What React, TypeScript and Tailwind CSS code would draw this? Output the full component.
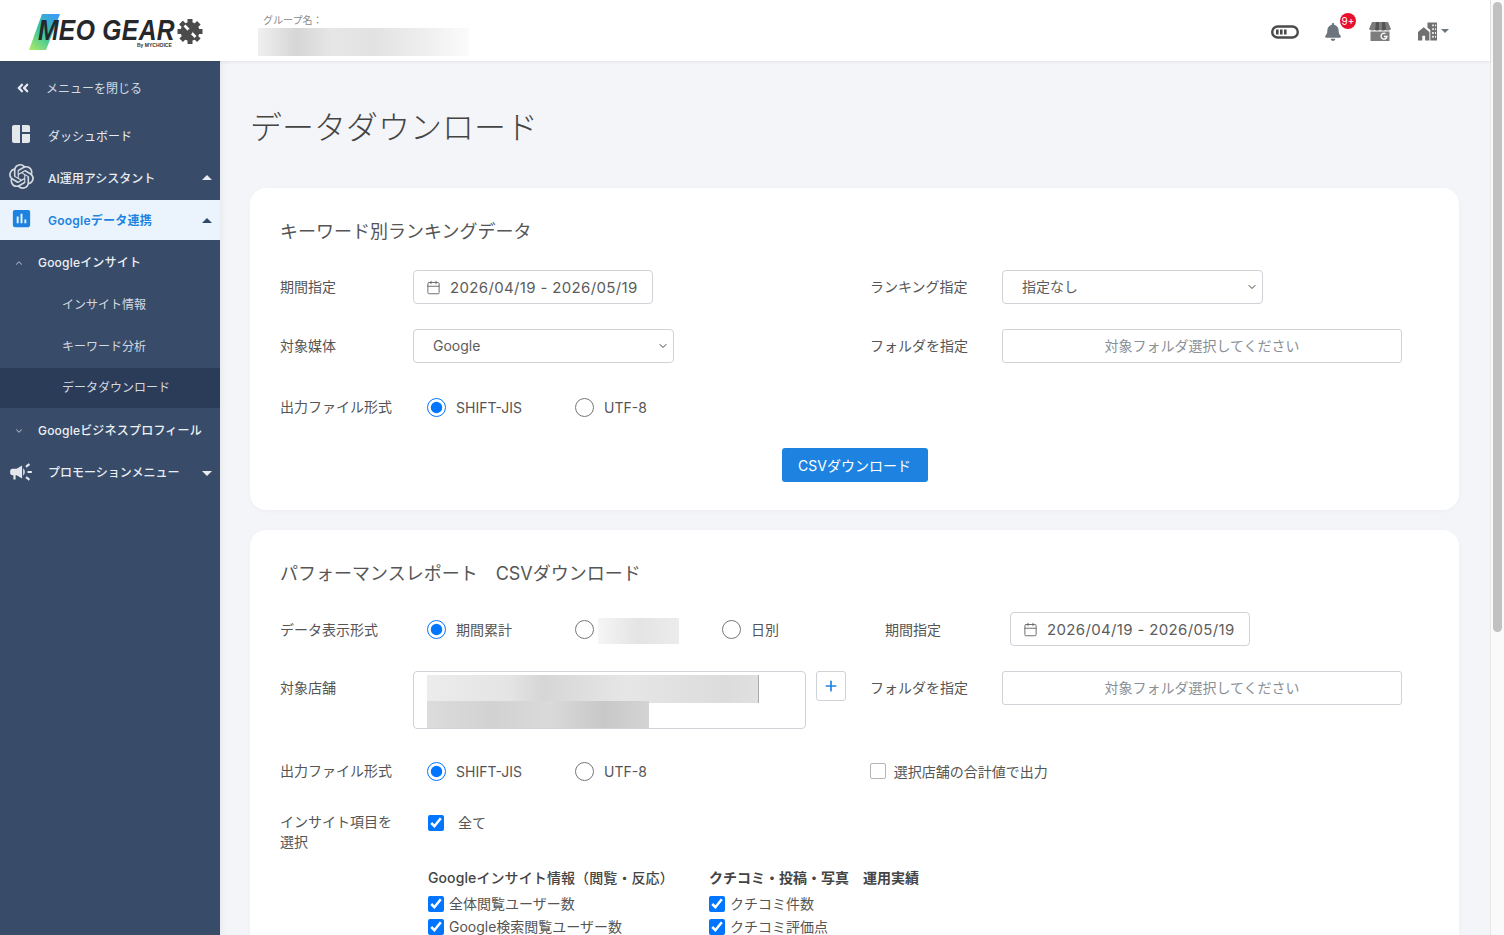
import { ReactNode } from 'react';
import { Calendar, ChevronDown, ChevronUp, Plus } from 'lucide-react';
import { FaAngleDoubleLeft, FaBell } from 'react-icons/fa';
import { MdAssessment, MdCampaign, MdSpaceDashboard } from 'react-icons/md';
import { SiOpenai } from 'react-icons/si';

const font = '[font-family:Inter,"Noto_Sans_CJK_JP",sans-serif]';

const Caret = ({ up, className }: { up?: boolean; className?: string }) => (
  <svg width="12" height="6" viewBox="0 0 12 6" className={className}>
    <path d={up ? 'M0 6 L6 0 L12 6 Z' : 'M0 0 L6 6 L12 0 Z'} fill="currentColor" />
  </svg>
);

const LogoGear = () => (
  <svg width="26" height="27" viewBox="0 0 26 26" className="absolute left-[177px] top-[18px]">
    {[0, 45, 90, 135, 180, 225, 270, 315].map((deg) => (
      <rect key={deg} x="10.5" y="0.5" width="5" height="6" fill="#4b4b4b" transform={`rotate(${deg} 13 13)`} />
    ))}
    <circle cx="13" cy="13" r="9.5" fill="#4b4b4b" />
    <path d="M4 4 L9 9" stroke="#4b4b4b" strokeWidth="5" />
    <path d="M7.5 7 L18.5 18.5" stroke="#fff" strokeWidth="2.6" />
    <circle cx="13" cy="13" r="2.6" fill="#4b4b4b" />
  </svg>
);

const Logo = () => (
  <div className="relative w-[220px] h-[61px] shrink-0">
    <svg width="34" height="38" viewBox="0 0 34 38" className="absolute left-[28px] top-[13px]">
      <defs>
        <linearGradient id="logoGrad" x1="0.8" y1="0" x2="0.1" y2="1">
          <stop offset="0" stopColor="#3b9bf5" />
          <stop offset="0.5" stopColor="#35c4a0" />
          <stop offset="1" stopColor="#a5e868" />
        </linearGradient>
      </defs>
      <path d="M14 1 H32 L18 37 H1 Z" fill="url(#logoGrad)" />
    </svg>
    <span className="absolute left-[38px] top-[18px] text-[29px] leading-[25px] italic font-bold text-[#26272b] tracking-[0.4px] whitespace-nowrap [font-family:'Liberation_Sans',sans-serif] scale-x-[0.85] origin-left">
      MEO GEAR
    </span>
    <span className="absolute left-[137px] top-[43px] text-[5px] leading-[5px] font-bold text-[#333] whitespace-nowrap [font-family:'Liberation_Sans',sans-serif]">
      By MYCHOICE
    </span>
    <LogoGear />
  </div>
);

const Header = () => (
  <header className="h-[61px] bg-white flex items-center shadow-[0_1px_3px_rgba(0,0,0,0.08)] relative z-10 shrink-0">
    <Logo />
    <div className="ml-[38px] self-start pt-[13px]">
      <div className="text-[10px] leading-[14px] text-[#8a8a8a] pl-[5px]">グループ名：</div>
      <div className="w-[211px] h-[28px] mt-px bg-[linear-gradient(90deg,#f0f0f0_0%,#d6d6d6_18%,#e6e6e6_35%,#e2e2e2_55%,#efefef_80%,#fbfbfb_100%)]" />
    </div>
    <div className="ml-auto flex items-center pr-[41px]">
      <svg width="28" height="14" viewBox="0 0 28 14" className="mr-[25px] mt-[2px]">
        <rect x="1.2" y="1.5" width="25.6" height="11" rx="5.5" fill="none" stroke="#4a4a4a" strokeWidth="2.4" />
        <rect x="5" y="4.5" width="2.6" height="5" fill="#4a4a4a" />
        <rect x="9" y="4.5" width="2.6" height="5" fill="#4a4a4a" />
        <rect x="13" y="4.5" width="2.6" height="5" fill="#4a4a4a" />
      </svg>
      <div className="relative w-[17px] h-[20px] mr-[28px]">
        <FaBell size={18} className="text-[#6c757d] mt-[2px]" />
        <span className="absolute left-[16px] top-[-8px] w-[16px] h-[16px] rounded-full bg-[#e8112d] text-white text-[10px] leading-[16px] text-center">
          9+
        </span>
      </div>
      <svg width="22" height="19" viewBox="0 0 22 19" className="mr-[27px] mt-[2px]">
        <path d="M3 0 H19 L22 7 Q20 9.5 16.5 8 Q14 9.5 11 8 Q8 9.5 5.5 8 Q2 9.5 0 7 Z" fill="#7d7d7d" />
        <path d="M7 0 H10 V8 H6 Z M13 0 H16 L17 8 H13 Z" fill="#555" />
        <path d="M1.5 9.5 H20.5 V19 H1.5 Z" fill="#7d7d7d" />
        <path d="M16.5 11.5 a3 3 0 1 0 1.5 3 h-3" fill="none" stroke="#fff" strokeWidth="1.3" />
      </svg>
      <svg width="19" height="19" viewBox="0 0 20 19" className="mt-[2px]">
        <path d="M10 0 H20 V19 H13 V8 L10 5.5 Z" fill="#707070" />
        <path d="M15 2 h1.6 v2 H15 Z M18 2 h1 v2 h-1 Z M15 6 h1.6 v2 H15 Z M18 6 h1 v2 h-1 Z M15 10 h1.6 v2 H15 Z M18 10 h1 v2 h-1 Z M15 14 h1.6 v2 H15 Z M18 14 h1 v2 h-1 Z" fill="#fff" />
        <path d="M6 5 L0 10 V19 H4.5 V14 H7.5 V19 H12 V10 Z" fill="#707070" />
      </svg>
      <Caret className="text-[#6c757d] ml-[4px] w-[8px] h-[4px]" />
    </div>
  </header>
);

const NavRow = ({
  icon,
  label,
  caret,
  active,
  bold = true,
  textClass,
}: {
  icon: ReactNode;
  label: string;
  caret?: 'up' | 'down';
  active?: boolean;
  bold?: boolean;
  textClass?: string;
}) => (
  <div className={`flex items-center pl-[48px] pr-[8px] relative text-[12px] ${bold ? 'font-medium' : ''} ${active ? 'h-[40px] bg-[#ebf4fc] text-[#1e83e0] font-semibold' : 'h-[42px] text-[#e9ecf1]'}`}>
    <span className="absolute left-0 w-[42px] flex justify-center">{icon}</span>
    <span className={`flex-1 ${textClass ?? ''}`}>{label}</span>
    {caret && <Caret up={caret === 'up'} className={`w-[10px] h-[5px] ${active ? 'text-[#2f4a6d]' : 'text-[#e9ecf1]'}`} />}
  </div>
);

const SubRow = ({ label, up }: { label: string; up: boolean }) => (
  <div className="h-[42px] flex items-center pl-[14px] text-[12px] font-medium tracking-[0.2px] text-[#eef0f4]">
    {up ? <ChevronUp size={10} className="text-[#aab4c2] mr-[14px]" strokeWidth={2.5} /> : <ChevronDown size={10} className="text-[#aab4c2] mr-[14px]" strokeWidth={2.5} />}
    {label}
  </div>
);

const LeafRow = ({ label, current }: { label: string; current?: boolean }) => (
  <div className={`flex items-center pl-[62px] text-[12px] text-[#d4d9e1] ${current ? 'h-[40px] mb-[2px] bg-[#2b3c59]' : 'h-[42px]'}`}>{label}</div>
);

const Sidebar = () => (
  <aside className="w-[220px] shrink-0 bg-[#384c69] pt-[6px] relative z-[5]">
    <div className="h-[42px] flex items-center pl-[16px] text-[12px] text-[#d4d9e1]">
      <FaAngleDoubleLeft size={14} className="text-[#e9ecf1] mr-[16px]" />
      <span className="pt-[2px]">メニューを閉じる</span>
    </div>
    <div className="h-[5px]" />
    <NavRow icon={<MdSpaceDashboard size={24} className="text-[#e4e7ec] -translate-y-px" />} label="ダッシュボード" bold={false} textClass="pt-[4px]" />
    <NavRow icon={<SiOpenai size={25} className="text-[#d6dae1] -translate-y-px" />} label="AI運用アシスタント" caret="up" textClass="pt-[4px]" />
    <div className="h-[2px]" />
    <NavRow icon={<MdAssessment size={23} className="text-[#1e83e0] -translate-y-[2px]" />} label="Googleデータ連携" caret="up" active textClass="pt-[2px] tracking-[0.25px]" />
    <div className="h-[2px]" />
    <SubRow label="Googleインサイト" up />
    <LeafRow label="インサイト情報" />
    <LeafRow label="キーワード分析" />
    <LeafRow label="データダウンロード" current />
    <SubRow label="Googleビジネスプロフィール" up={false} />
    <NavRow icon={<MdCampaign size={26} className="text-[#e4e7ec] -translate-y-px" />} label="プロモーションメニュー" caret="down" />
  </aside>
);

const DateRange = () => (
  <div className="w-[240px] h-[34px] flex items-center border border-[#cfd3d8] rounded-[4px] bg-white pl-[12px] text-[15px] tracking-[0.35px] text-[#5c5c5c]">
    <Calendar size={15} className="text-[#666] mr-[9px]" strokeWidth={1.5} />
    <span className="pt-[2px]">2026/04/19 - 2026/05/19</span>
  </div>
);

const SelectBox = ({ value }: { value: string }) => (
  <div className="w-[261px] h-[34px] flex items-center border border-[#cfd3d8] rounded-[4px] bg-white pl-[19px] pr-[4px] text-[14px] text-[#5c5c5c]">
    <span className="flex-1 pb-[2px]">{value}</span>
    <ChevronDown size={12} className="text-[#444]" />
  </div>
);

const FolderButton = () => (
  <div className="w-[400px] h-[34px] flex items-center justify-center border border-[#cfd3d8] rounded-[3px] bg-white text-[14px] text-[#8a8f96]">
    <span className="pb-[2px]">対象フォルダ選択してください</span>
  </div>
);

const Radio = ({ label, name, checked, className }: { label?: string; name: string; checked?: boolean; className?: string }) => (
  <label className={`flex items-center text-[14px] text-[#555] ${className ?? ''}`}>
    <input type="radio" defaultChecked={checked} name={name} className="w-[19px] h-[19px] m-0 mr-[10px] accent-[#0075ff]" />
    {label}
  </label>
);

const Check = ({ label, className }: { label: string; className?: string }) => (
  <label className={`flex items-center text-[14px] leading-[23px] text-[#555] ${className ?? ''}`}>
    <input type="checkbox" defaultChecked className="w-[16px] h-[16px] m-0 mr-[5px] accent-[#0075ff]" />
    {label}
  </label>
);

const FileFormat = ({ name }: { name: string }) => (
  <>
    <Radio name={name} label="SHIFT-JIS" checked className="w-[148px]" />
    <Radio name={name} label="UTF-8" />
  </>
);

const Label = ({ children, w = 'w-[147px]' }: { children: ReactNode; w?: string }) => (
  <div className={`${w} shrink-0 text-[14px] text-[#555]`}>{children}</div>
);

const Card = ({ children, className }: { children: ReactNode; className?: string }) => (
  <section className={`bg-white rounded-[16px] px-[30px] shadow-[0_1px_4px_rgba(0,0,0,0.03)] ${className ?? ''}`}>{children}</section>
);

const App = () => (
  <div className={`w-[1504px] h-[935px] overflow-hidden flex ${font}`}>
    <div className="flex-1 flex flex-col min-w-0">
      <Header />
      <div className="flex-1 flex min-h-0">
        <Sidebar />
        <main className="flex-1 bg-[#f4f5f8] px-[30px] pr-[31px] overflow-hidden shadow-[inset_8px_0_8px_-8px_rgba(0,0,0,0.08)]">
          <h1 className="text-[32px] leading-[44px] text-[#444] pt-[45px] mb-[38px] font-light">データダウンロード</h1>

          <Card className="h-[322px] pt-[31px]">
            <h2 className="text-[18px] leading-[26px] text-[#555]">キーワード別ランキングデータ</h2>
            <div className="flex mt-[25px]">
              <div className="w-[590px] flex items-center">
                <Label w="w-[133px] pb-[2px]">期間指定</Label>
                <DateRange />
              </div>
              <div className="flex items-center">
                <Label w="w-[132px] pb-[2px]">ランキング指定</Label>
                <SelectBox value="指定なし" />
              </div>
            </div>
            <div className="flex mt-[25px]">
              <div className="w-[590px] flex items-center">
                <Label w="w-[133px] pb-[2px]">対象媒体</Label>
                <SelectBox value="Google" />
              </div>
              <div className="flex items-center">
                <Label w="w-[132px] pb-[2px]">フォルダを指定</Label>
                <FolderButton />
              </div>
            </div>
            <div className="flex items-center mt-[34px] h-[20px]">
              <Label w="w-[147px] pb-[2px]">出力ファイル形式</Label>
              <FileFormat name="format1" />
            </div>
            <div className="flex justify-center mt-[31px]">
              <button className="w-[146px] h-[34px] bg-[#1e83e0] text-white text-[14px] rounded-[3px]">CSVダウンロード</button>
            </div>
          </Card>

          <Card className="mt-[20px] h-[500px] pt-[31px]">
            <h2 className="text-[18px] leading-[26px] text-[#555]">パフォーマンスレポート　CSVダウンロード</h2>
            <div className="flex items-center mt-[25px] h-[34px]">
              <Label>データ表示形式</Label>
              <Radio name="display" label="期間累計" checked className="w-[148px]" />
              <div className="w-[147px] flex items-center">
                <input type="radio" name="display" className="w-[19px] h-[19px] m-0 mr-[4px] accent-[#0075ff]" />
                <div className="w-[81px] h-[26px] mt-[4px] bg-[linear-gradient(90deg,#f5f5f5_0%,#e4e4e4_50%,#ececec_100%)]" />
              </div>
              <Radio name="display" label="日別" className="w-[163px]" />
              <Label w="w-[125px]">期間指定</Label>
              <DateRange />
            </div>
            <div className="flex items-start mt-[25px]">
              <div className="w-[133px] pt-[6px] text-[14px] text-[#555]">対象店舗</div>
              <div className="w-[393px] h-[58px] border border-[#cfd3d8] rounded-[4px] bg-white pl-[13px] pt-[3px] overflow-hidden">
                <div className="w-[332px] h-[28px] border-r border-[#aaa] bg-[linear-gradient(90deg,#ececec_0%,#e4e4e4_25%,#d6d6d6_35%,#e6e6e6_60%,#dcdcdc_90%,#e0e0e0_100%)]" />
                <div className="w-[222px] h-[28px] -mt-[2px] bg-[linear-gradient(90deg,#dcdcdc_0%,#d2d2d2_30%,#dadada_55%,#c8c8c8_80%,#d4d4d4_100%)]" />
              </div>
              <button className="w-[30px] h-[30px] ml-[10px] flex items-center justify-center border border-[#cfd3d8] rounded-[3px] bg-white text-[#1e83e0]">
                <Plus size={16} strokeWidth={2.5} />
              </button>
              <div className="ml-[24px] w-[132px] pt-[6px] text-[14px] text-[#555]">フォルダを指定</div>
              <FolderButton />
            </div>
            <div className="flex items-center mt-[32px] h-[20px]">
              <Label w="w-[147px] pb-[2px]">出力ファイル形式</Label>
              <FileFormat name="format2" />
              <label className="flex items-center ml-[223px] text-[14px] text-[#555]">
                <input type="checkbox" className="appearance-none w-[16px] h-[16px] m-0 mr-[8px] border border-[#b5b5b5] rounded-[2px] bg-white" />
                選択店舗の合計値で出力
              </label>
            </div>
            <div className="flex items-start mt-[31px]">
              <Label w="w-[148px] leading-[20px]">
                インサイト項目を
                <br />
                選択
              </Label>
              <Check label="全て" className="[&>input]:mr-[14px] mt-[-1px]" />
            </div>
            <div className="flex ml-[148px] mt-[14px]">
              <div className="w-[281px]">
                <div className="text-[14px] leading-[24px] font-medium tracking-[0.1px] text-[#444] mb-[2px]">Googleインサイト情報（閲覧・反応）</div>
                <Check label="全体閲覧ユーザー数" />
                <Check label="Google検索閲覧ユーザー数" />
              </div>
              <div>
                <div className="text-[14px] leading-[24px] font-semibold text-[#444] mb-[2px]">クチコミ・投稿・写真　運用実績</div>
                <Check label="クチコミ件数" />
                <Check label="クチコミ評価点" />
              </div>
            </div>
          </Card>
        </main>
      </div>
    </div>
    <div className="w-[14px] shrink-0 bg-[#fafafa] border-l border-[#e8e8e8] pt-[2px] flex justify-center">
      <div className="w-[9px] h-[630px] rounded-full bg-[#c1c1c1]" />
    </div>
  </div>
);

export default App;
